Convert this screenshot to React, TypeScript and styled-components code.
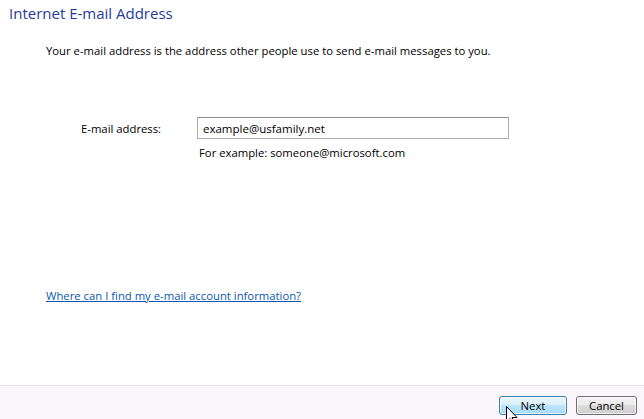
import React from "react";
import styled, { createGlobalStyle } from "styled-components";

const Global = createGlobalStyle`
  html, body { margin: 0; padding: 0; background: #ffffff; }
  body { font-family: "Open Sans", "Noto Sans", "Liberation Sans", sans-serif; }
`;

const Window = styled.div`
  width: 644px;
  height: 419px;
  display: flex;
  flex-direction: column;
  background: #ffffff;
  position: relative;
  overflow: hidden;
`;

const Content = styled.div`
  flex: 1;
  display: flex;
  flex-direction: column;
  padding: 2px 0 0 9px;
`;

const Title = styled.h1`
  margin: 0;
  font-size: 15px;
  font-weight: 400;
  line-height: 22px;
  color: #1f3c98;
`;

const Body = styled.div`
  display: flex;
  flex-direction: column;
  padding-left: 37px;
`;

const Description = styled.p`
  margin: 19px 0 0 0;
  font-size: 11.3px;
  line-height: 16px;
  color: #000;
`;

const FormGrid = styled.div`
  display: grid;
  grid-template-columns: 151px 312px;
  row-gap: 6px;
  margin-top: 58px;
  align-items: center;
`;

const Label = styled.label`
  font-size: 11.3px;
  color: #000;
  padding-left: 35px;
`;

const Input = styled.input`
  box-sizing: border-box;
  width: 312px;
  height: 22px;
  border: 1px solid #abadb3;
  border-top-color: #8e8f8f;
  padding: 0 5px;
  font-family: inherit;
  font-size: 11.5px;
  color: #000;
  outline: none;
  background: #fff;
`;

const Hint = styled.span`
  grid-column: 2;
  font-size: 11.3px;
  color: #000;
  padding-left: 2px;
`;

const Link = styled.a`
  margin-top: 128px;
  font-size: 11.3px;
  color: #0a58b0;
  text-decoration: underline;
  cursor: pointer;
  align-self: flex-start;
`;

const Footer = styled.div`
  box-sizing: border-box;
  height: 34px;
  border-top: 1px solid #ece2ec;
  background: #fbf6fb;
  display: flex;
  justify-content: flex-end;
  align-items: flex-start;
  gap: 9px;
  padding: 10px 7px 0 0;
`;

const Button = styled.button<{ $hot?: boolean; $w: number }>`
  width: ${(p) => p.$w}px;
  height: 19px;
  box-sizing: border-box;
  border-radius: 3px;
  font-family: inherit;
  font-size: 11.3px;
  line-height: 1;
  color: #000;
  padding: 0;
  border: 1px solid ${(p) => (p.$hot ? "#3c7fb1" : "#707070")};
  background: ${(p) =>
    p.$hot
      ? "linear-gradient(#eaf6fd 0%, #d9f0fc 45%, #bee6fd 50%, #a7d9f5 100%)"
      : "linear-gradient(#f2f2f2 0%, #ebebeb 45%, #dddddd 50%, #cfcfcf 100%)"};
  box-shadow: inset 0 0 0 1px rgba(255, 255, 255, 0.7);
`;

const Cursor = styled.svg`
  position: absolute;
  left: 506px;
  top: 406px;
  width: 12px;
  height: 19px;
`;

export default function App() {
  return (
    <Window>
      <Global />
      <Content>
        <Title>Internet E-mail Address</Title>
        <Body>
          <Description>
            Your e-mail address is the address other people use to send e-mail messages to you.
          </Description>
          <FormGrid>
            <Label htmlFor="email">E-mail address:</Label>
            <Input id="email" defaultValue="example@usfamily.net" />
            <Hint>For example: someone@microsoft.com</Hint>
          </FormGrid>
          <Link>Where can I find my e-mail account information?</Link>
        </Body>
      </Content>
      <Footer>
        <Button $hot $w={68}>Next</Button>
        <Button $w={61}>Cancel</Button>
      </Footer>
      <Cursor viewBox="0 0 12 19">
        <path d="M0.5 0.5 L0.5 16 L4 12.5 L6.5 18 L8.5 17 L6 11.5 L11 11.5 Z" fill="#fff" stroke="#000" strokeWidth="1" />
      </Cursor>
    </Window>
  );
}
